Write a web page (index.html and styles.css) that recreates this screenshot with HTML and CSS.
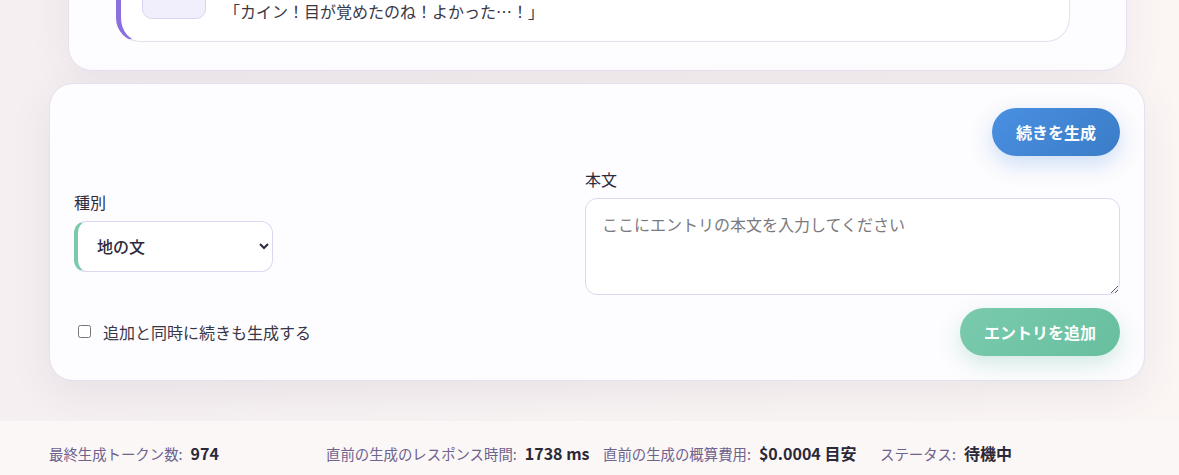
FILE: index.html
```html
<!DOCTYPE html>
<html lang="ja">
<head>
<meta charset="utf-8">
<title>Story</title>
<link rel="stylesheet" href="styles.css">
</head>
<body>
<div class="page">
  <main class="container">
    <section class="log-card">
      <article class="entry">
        <div class="avatar"></div>
        <div class="entry-body">
          <p class="entry-text">「カイン！目が覚めたのね！よかった…！」</p>
        </div>
      </article>
    </section>

    <section class="editor-card">
      <div class="row row-end">
        <button class="btn btn-blue" type="button">続きを生成</button>
      </div>
      <div class="fields">
        <div class="field">
          <label class="field-label" for="kind">種別</label>
          <select id="kind" class="select">
            <option>地の文</option>
            <option>セリフ</option>
          </select>
        </div>
        <div class="field">
          <label class="field-label" for="body">本文</label>
          <textarea id="body" class="textarea" placeholder="ここにエントリの本文を入力してください"></textarea>
        </div>
      </div>
      <div class="row row-between">
        <label class="check"><input type="checkbox"> <span>追加と同時に続きも生成する</span></label>
        <button class="btn btn-green" type="button">エントリを追加</button>
      </div>
    </section>
  </main>

  <footer class="stats">
    <div class="stat"><span class="stat-label">最終生成トークン数:</span><span class="stat-value">974</span></div>
    <div class="stat"><span class="stat-label">直前の生成のレスポンス時間:</span><span class="stat-value">1738 ms</span></div>
    <div class="stat"><span class="stat-label">直前の生成の概算費用:</span><span class="stat-value">$0.0004 目安</span></div>
    <div class="stat"><span class="stat-label">ステータス:</span><span class="stat-value">待機中</span></div>
  </footer>
</div>
</body>
</html>
```

FILE: styles.css
```css
* { box-sizing: border-box; }

html, body {
  margin: 0;
  padding: 0;
}

body {
  font-family: "Noto Sans CJK JP", "Noto Sans", sans-serif;
  color: #2e2a3b;
  background: linear-gradient(90deg, #f5eff1 0%, #f8f3f3 50%, #fbf6f4 100%);
  height: 475px;
  overflow: hidden;
}

.page {
  display: flex;
  flex-direction: column;
}

.container {
  width: 1096px;
  margin-left: 49px;
  display: flex;
  flex-direction: column;
  gap: 12px;
}

/* top (scrolled) log card */
.log-card {
  margin: -87px 18px 0 19px;
  padding: 24px 56px 28px 47px;
  background: #fdfcfe;
  border: 1px solid #e6e0f0;
  border-radius: 24px;
  box-shadow: 0 10px 40px rgba(90, 70, 110, 0.08);
}

.entry {
  display: flex;
  align-items: flex-start;
  gap: 18px;
  padding: 16px 24px 16px 21px;
  background: #ffffff;
  border: 1px solid #e5e0ee;
  border-left: 5px solid #8b6fde;
  border-radius: 24px;
}

.avatar {
  width: 64px;
  height: 64px;
  flex: none;
  background: #f2effc;
  border: 1px solid #dcd3f3;
  border-radius: 10px;
}

.entry-body {
  display: flex;
  flex-direction: column;
  padding-top: 44px;
}

.entry-text {
  margin: 0;
  font-size: 16px;
  line-height: 25.6px;
  color: #3a3746;
}

/* editor card */
.editor-card {
  padding: 24px;
  background: #fdfcfe;
  border: 1px solid #e6e0f0;
  border-radius: 24px;
  box-shadow: 0 12px 40px rgba(90, 70, 110, 0.09);
  display: flex;
  flex-direction: column;
  gap: 12px;
}

.row {
  display: flex;
  align-items: center;
}

.row-end { justify-content: flex-end; }
.row-between { justify-content: space-between; }

.btn {
  font-family: inherit;
  font-size: 16px;
  font-weight: 700;
  color: #ffffff;
  border: none;
  border-radius: 999px;
  height: 48px;
  padding: 0 24px;
  cursor: pointer;
}

.btn-blue {
  background: linear-gradient(135deg, #4a90e2 0%, #3a7cc6 100%);
  box-shadow: 0 8px 22px rgba(74, 144, 226, 0.28);
}

.btn-green {
  background: linear-gradient(135deg, #7bcbae 0%, #66bf9e 100%);
  box-shadow: 0 8px 22px rgba(102, 191, 158, 0.28);
}

.fields {
  display: grid;
  grid-template-columns: 487px 1fr;
  column-gap: 24px;
  align-items: center;
  margin-bottom: 1px;
}

.field {
  display: flex;
  flex-direction: column;
  align-items: flex-start;
}

.field-label {
  font-size: 16px;
  line-height: 22px;
  font-weight: 400;
  color: #2e2a3b;
  margin-bottom: 8px;
}

.select {
  width: 199px;
  height: 51px;
  font-family: inherit;
  font-size: 16px;
  font-weight: 500;
  color: #2e2a3b;
  background: #ffffff;
  border: 1px solid #ddd7f2;
  border-left: 4px solid #79c9ac;
  border-radius: 12px;
  padding: 0 12px 0 15px;
}

.textarea {
  width: 100%;
  height: 97px;
  font-family: inherit;
  font-size: 16px;
  line-height: 1.5;
  color: #2e2a3b;
  background: #ffffff;
  border: 1px solid #ddd7f2;
  border-radius: 12px;
  padding: 13px 16px;
  resize: vertical;
}

.textarea::placeholder {
  color: #7a7a7e;
}

.check {
  display: flex;
  align-items: center;
  gap: 12px;
  font-size: 16px;
  color: #3a3648;
}

.check input {
  margin: 0 0 0 4px;
  width: 13px;
  height: 13px;
}

/* footer stats */
.stats {
  margin-top: 40px;
  padding: 20px 35px 30px 49px;
  background: #fbf7f6;
  display: grid;
  grid-template-columns: repeat(4, 264px);
  column-gap: 13px;
}

.stat {
  display: flex;
  align-items: baseline;
  gap: 8px;
  white-space: nowrap;
}

.stat-label {
  font-size: 14.4px;
  color: #6e628e;
}

.stat-value {
  font-size: 16px;
  font-weight: 700;
  color: #2b2838;
}
```
